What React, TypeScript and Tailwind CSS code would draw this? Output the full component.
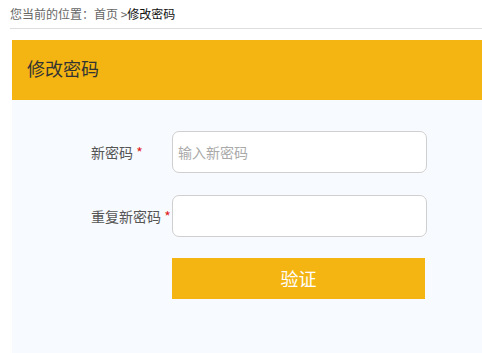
export default function App() {
  const font = { fontFamily: '"Noto Sans CJK SC", "Noto Sans", sans-serif' };
  return (
    <div className="w-[482px] h-[353px] bg-white overflow-hidden" style={font}>
      <div className="pl-[10px] pt-[5px]">
        <div className="text-[12px] leading-[17px] text-[#666] h-[23px]">
          您当前的位置：首页 &gt;<span className="text-[#111]">修改密码</span>
        </div>
        <div className="h-px bg-[#dddddd]"></div>
      </div>
      <div className="ml-[12px] mt-[11px]">
        <div className="h-[60px] bg-[#f4b512] flex items-center pl-[15px] pb-[3px] text-[18px] text-[#333]">
          修改密码
        </div>
        <div className="bg-[#f7faff] h-[260px] pt-[31px] pl-[79px]">
          <div className="flex items-center">
            <div className="w-[81px] text-[14px] text-[#555]">
              新密码 <span className="text-[#e02020]">*</span>
            </div>
            <input
              className="w-[255px] h-[42px] rounded-[7px] border border-[#cfcfcf] bg-white px-[5px] text-[14px] outline-none placeholder:text-[#aaa]"
              placeholder="输入新密码"
            />
          </div>
          <div className="flex items-center mt-[22px]">
            <div className="w-[81px] text-[14px] text-[#555] whitespace-nowrap">
              重复新密码 <span className="text-[#e02020]">*</span>
            </div>
            <input className="w-[255px] h-[42px] rounded-[7px] border border-[#cfcfcf] bg-white px-[5px] text-[14px] outline-none" />
          </div>
          <div className="mt-[21px] ml-[81px] w-[253px] h-[41px] bg-[#f4b512] text-white text-[18px] flex items-center justify-center">
            验证
          </div>
        </div>
      </div>
    </div>
  );
}
